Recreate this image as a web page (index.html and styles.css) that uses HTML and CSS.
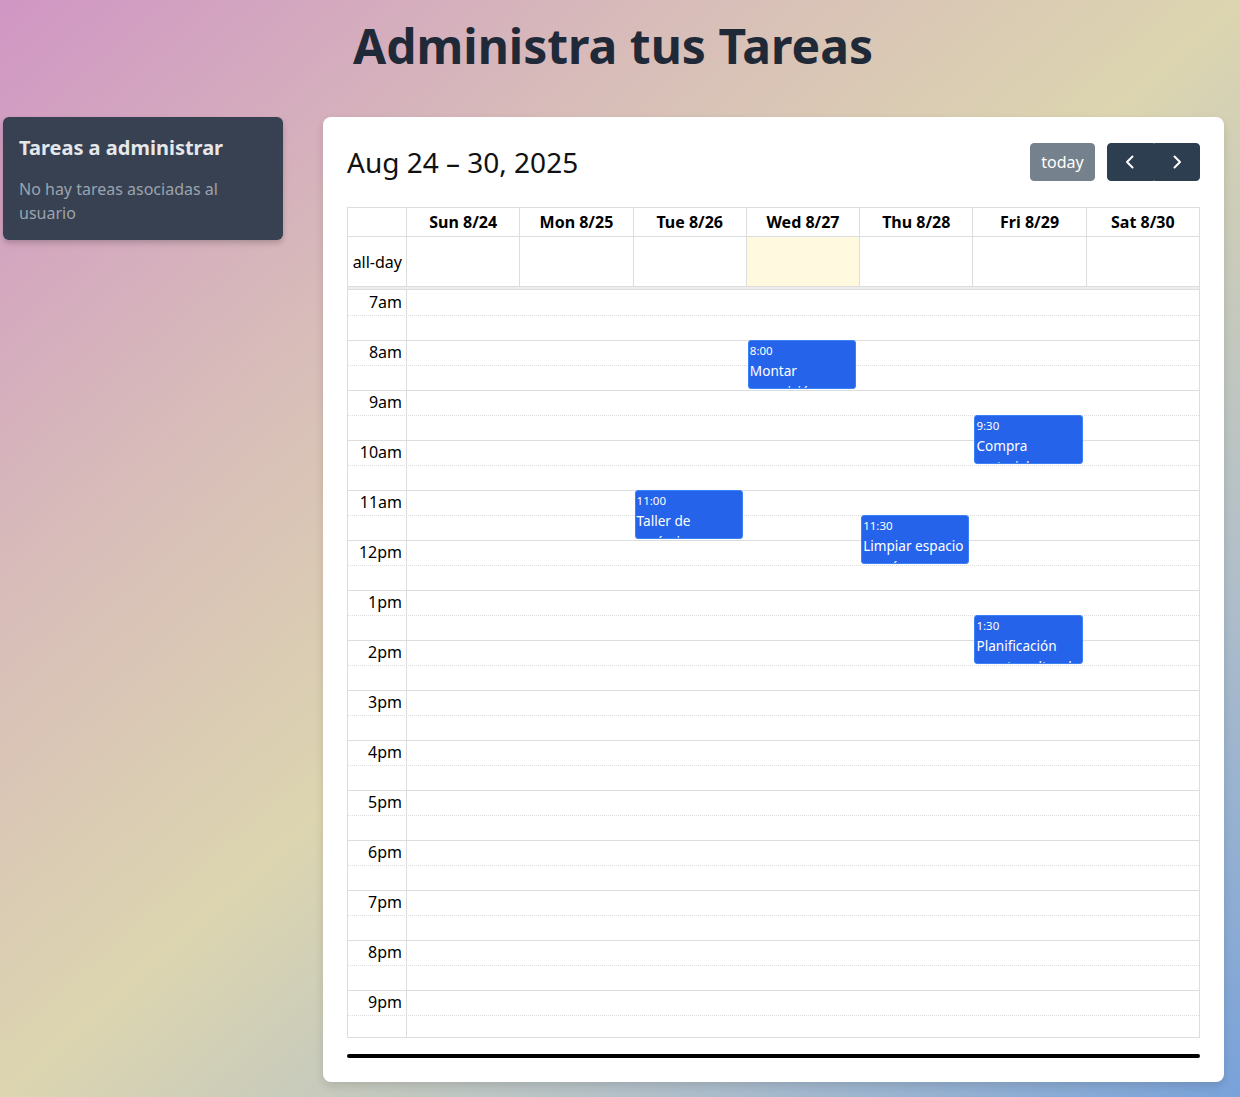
FILE: index.html
```html
<!DOCTYPE html>
<html lang="es">
<head>
<meta charset="utf-8">
<title>Administra tus Tareas</title>
<link rel="stylesheet" href="styles.css">
</head>
<body>
<h1 class="page-title">Administra tus Tareas</h1>
<main class="layout">
  <aside class="tasks-card">
    <h2 class="tasks-title">Tareas a administrar</h2>
    <p class="tasks-empty">No hay tareas asociadas al usuario</p>
  </aside>
  <section class="calendar-card">
    <div class="toolbar">
      <h2 class="cal-title">Aug 24 – 30, 2025</h2>
      <div class="toolbar-right">
        <button class="btn btn-today" disabled>today</button>
        <div class="btn-group">
          <button class="btn btn-nav" aria-label="prev">
            <svg width="16" height="16" viewBox="0 0 16 16"><path d="M10.5 2.5 L5 8 L10.5 13.5" fill="none" stroke="#fff" stroke-width="2" stroke-linecap="round" stroke-linejoin="round"/></svg>
          </button>
          <button class="btn btn-nav" aria-label="next">
            <svg width="16" height="16" viewBox="0 0 16 16"><path d="M5.5 2.5 L11 8 L5.5 13.5" fill="none" stroke="#fff" stroke-width="2" stroke-linecap="round" stroke-linejoin="round"/></svg>
          </button>
        </div>
      </div>
    </div>
    <div class="cal">
      <div class="cal-row cal-head">
        <div class="axis"></div>
        <div class="day-head">Sun 8/24</div>
        <div class="day-head">Mon 8/25</div>
        <div class="day-head">Tue 8/26</div>
        <div class="day-head">Wed 8/27</div>
        <div class="day-head">Thu 8/28</div>
        <div class="day-head">Fri 8/29</div>
        <div class="day-head">Sat 8/30</div>
      </div>
      <div class="cal-row cal-allday">
        <div class="axis allday-label">all-day</div>
        <div class="day-cell"></div>
        <div class="day-cell"></div>
        <div class="day-cell"></div>
        <div class="day-cell today"></div>
        <div class="day-cell"></div>
        <div class="day-cell"></div>
        <div class="day-cell"></div>
      </div>
      <div class="cal-divider"></div>
      <div class="cal-body">
        <div class="slot major first"><div class="slot-label">7am</div><div class="slot-lane"></div></div>
        <div class="slot minor"><div class="slot-label"></div><div class="slot-lane"></div></div>
        <div class="slot major"><div class="slot-label">8am</div><div class="slot-lane"></div></div>
        <div class="slot minor"><div class="slot-label"></div><div class="slot-lane"></div></div>
        <div class="slot major"><div class="slot-label">9am</div><div class="slot-lane"></div></div>
        <div class="slot minor"><div class="slot-label"></div><div class="slot-lane"></div></div>
        <div class="slot major"><div class="slot-label">10am</div><div class="slot-lane"></div></div>
        <div class="slot minor"><div class="slot-label"></div><div class="slot-lane"></div></div>
        <div class="slot major"><div class="slot-label">11am</div><div class="slot-lane"></div></div>
        <div class="slot minor"><div class="slot-label"></div><div class="slot-lane"></div></div>
        <div class="slot major"><div class="slot-label">12pm</div><div class="slot-lane"></div></div>
        <div class="slot minor"><div class="slot-label"></div><div class="slot-lane"></div></div>
        <div class="slot major"><div class="slot-label">1pm</div><div class="slot-lane"></div></div>
        <div class="slot minor"><div class="slot-label"></div><div class="slot-lane"></div></div>
        <div class="slot major"><div class="slot-label">2pm</div><div class="slot-lane"></div></div>
        <div class="slot minor"><div class="slot-label"></div><div class="slot-lane"></div></div>
        <div class="slot major"><div class="slot-label">3pm</div><div class="slot-lane"></div></div>
        <div class="slot minor"><div class="slot-label"></div><div class="slot-lane"></div></div>
        <div class="slot major"><div class="slot-label">4pm</div><div class="slot-lane"></div></div>
        <div class="slot minor"><div class="slot-label"></div><div class="slot-lane"></div></div>
        <div class="slot major"><div class="slot-label">5pm</div><div class="slot-lane"></div></div>
        <div class="slot minor"><div class="slot-label"></div><div class="slot-lane"></div></div>
        <div class="slot major"><div class="slot-label">6pm</div><div class="slot-lane"></div></div>
        <div class="slot minor"><div class="slot-label"></div><div class="slot-lane"></div></div>
        <div class="slot major"><div class="slot-label">7pm</div><div class="slot-lane"></div></div>
        <div class="slot minor"><div class="slot-label"></div><div class="slot-lane"></div></div>
        <div class="slot major"><div class="slot-label">8pm</div><div class="slot-lane"></div></div>
        <div class="slot minor"><div class="slot-label"></div><div class="slot-lane"></div></div>
        <div class="slot major"><div class="slot-label">9pm</div><div class="slot-lane"></div></div>
        <div class="slot minor"><div class="slot-label"></div><div class="slot-lane"></div></div>

        <div class="event-cols">
          <div class="event-col"></div>
          <div class="event-col"></div>
          <div class="event-col">
            <div class="event" style="top:200px"><div class="ev-time">11:00</div><div class="ev-title">Taller de cerámica</div></div>
          </div>
          <div class="event-col">
            <div class="event" style="top:50px"><div class="ev-time">8:00</div><div class="ev-title">Montar exposición</div></div>
          </div>
          <div class="event-col">
            <div class="event" style="top:225px"><div class="ev-time">11:30</div><div class="ev-title">Limpiar espacio común</div></div>
          </div>
          <div class="event-col">
            <div class="event" style="top:125px"><div class="ev-time">9:30</div><div class="ev-title">Compra materiales</div></div>
            <div class="event" style="top:325px"><div class="ev-time">1:30</div><div class="ev-title">Planificación evento cultural</div></div>
          </div>
          <div class="event-col"></div>
        </div>
      </div>
    </div>
    <div class="scrollbar"></div>
  </section>
</main>
</body>
</html>
```

FILE: styles.css
```css
* { box-sizing: border-box; }

html, body {
  margin: 0;
  height: 100%;
}

body {
  font-family: "Noto Sans", "Open Sans", sans-serif;
  background: linear-gradient(to bottom right, #d096c4 0%, #d8bdb9 28%, #dcd5b0 50%, #b3c0c8 75%, #78a2da 100%);
  min-height: 1097px;
  overflow: hidden;
}

.page-title {
  margin: 0;
  padding: 16px 14px 0 0;
  height: 117px;
  font-size: 48px;
  line-height: 60px;
  font-weight: 700;
  text-align: center;
  color: #1f2937;
}

.layout {
  display: flex;
  align-items: flex-start;
  gap: 40px;
  padding: 0 16px 0 3px;
}

.tasks-card {
  flex: 0 0 280px;
  background: #374151;
  border-radius: 6px;
  padding: 17px 16px 15px;
  box-shadow: 0 4px 6px rgba(0, 0, 0, 0.12), 0 2px 4px rgba(0, 0, 0, 0.08);
}

.tasks-title {
  margin: 0 0 15px;
  font-size: 20px;
  line-height: 28px;
  font-weight: 700;
  color: #e5e7eb;
}

.tasks-empty {
  margin: 0;
  font-size: 16px;
  line-height: 24px;
  color: #9ca3af;
}

.calendar-card {
  flex: 1;
  background: #fff;
  border-radius: 8px;
  padding: 24px;
  box-shadow: 0 4px 10px rgba(0, 0, 0, 0.12);
}

.toolbar {
  display: flex;
  align-items: center;
  justify-content: space-between;
  height: 42px;
  margin-bottom: 24px;
}

.cal-title {
  margin: 0;
  font-size: 28px;
  line-height: 42px;
  font-weight: 400;
  color: #111;
}

.toolbar-right {
  display: flex;
  align-items: center;
  gap: 12px;
}

.btn {
  font-family: inherit;
  font-size: 16px;
  line-height: 24px;
  height: 38px;
  border: 1px solid #2c3e50;
  background: #2c3e50;
  color: #fff;
  border-radius: 4px;
  padding: 6px 10px;
  cursor: pointer;
}

.btn-today {
  opacity: 0.65;
  width: 65px;
}

.btn-group {
  display: flex;
}

.btn-nav {
  width: 46.5px;
  display: flex;
  align-items: center;
  justify-content: center;
  padding: 0;
}

.btn-nav:first-child {
  border-radius: 4px 0 0 4px;
}

.btn-nav:last-child {
  border-radius: 0 4px 4px 0;
}

.cal {
  border: 1px solid #ddd;
  color: #000;
}

.cal-row {
  display: grid;
  grid-template-columns: 58px repeat(7, 1fr);
}

.cal-head {
  height: 29px;
  border-bottom: 1px solid #ddd;
}

.day-head {
  border-left: 1px solid #ddd;
  text-align: center;
  font-weight: 700;
  font-size: 16px;
  line-height: 28px;
}

.cal-allday {
  height: 49px;
}

.allday-label {
  display: flex;
  align-items: center;
  justify-content: flex-end;
  padding-right: 4px;
  font-size: 16px;
  padding-top: 1px;
}

.day-cell {
  border-left: 1px solid #ddd;
}

.day-cell.today {
  background: rgba(255, 220, 40, 0.15);
}

.cal-divider {
  height: 4px;
  border-top: 1px solid #ddd;
  border-bottom: 1px solid #ddd;
  background: #eee;
}

.cal-body {
  position: relative;
  height: 747px;
  overflow: hidden;
}

.slot {
  display: flex;
  height: 25px;
}

.slot.major {
  border-top: 1px solid #ddd;
}

.slot.major.first {
  border-top: 0;
}

.slot.minor {
  border-top: 1px dotted #ddd;
}

.slot-label {
  flex: 0 0 58px;
  text-align: right;
  padding-right: 4px;
  font-size: 16px;
  line-height: 24px;
  white-space: nowrap;
}

.slot.major .slot-label {
  margin-top: -1px;
}

.slot.major.first .slot-label {
  margin-top: 0;
}

.slot-lane {
  flex: 1;
  border-left: 1px solid #ddd;
  margin-top: -1px;
  margin-bottom: -1px;
}

.event-cols {
  position: absolute;
  top: 0;
  bottom: 0;
  left: 58px;
  right: 0;
  display: grid;
  grid-template-columns: repeat(7, 1fr);
}

.event-col {
  position: relative;
}

.event {
  position: absolute;
  left: 2px;
  right: 3px;
  height: 49px;
  background: #2563eb;
  border: 1px solid #3b82f6;
  border-radius: 3px;
  color: #fff;
  padding: 1px 1px 0;
  overflow: hidden;
  font-size: 13.6px;
}

.ev-time {
  font-size: 11.5px;
  line-height: 18px;
  white-space: nowrap;
}

.ev-title {
  font-size: 13.6px;
  line-height: 21px;
}

.scrollbar {
  margin-top: 16px;
  height: 4px;
  background: #000;
  border-radius: 2px;
}
```
